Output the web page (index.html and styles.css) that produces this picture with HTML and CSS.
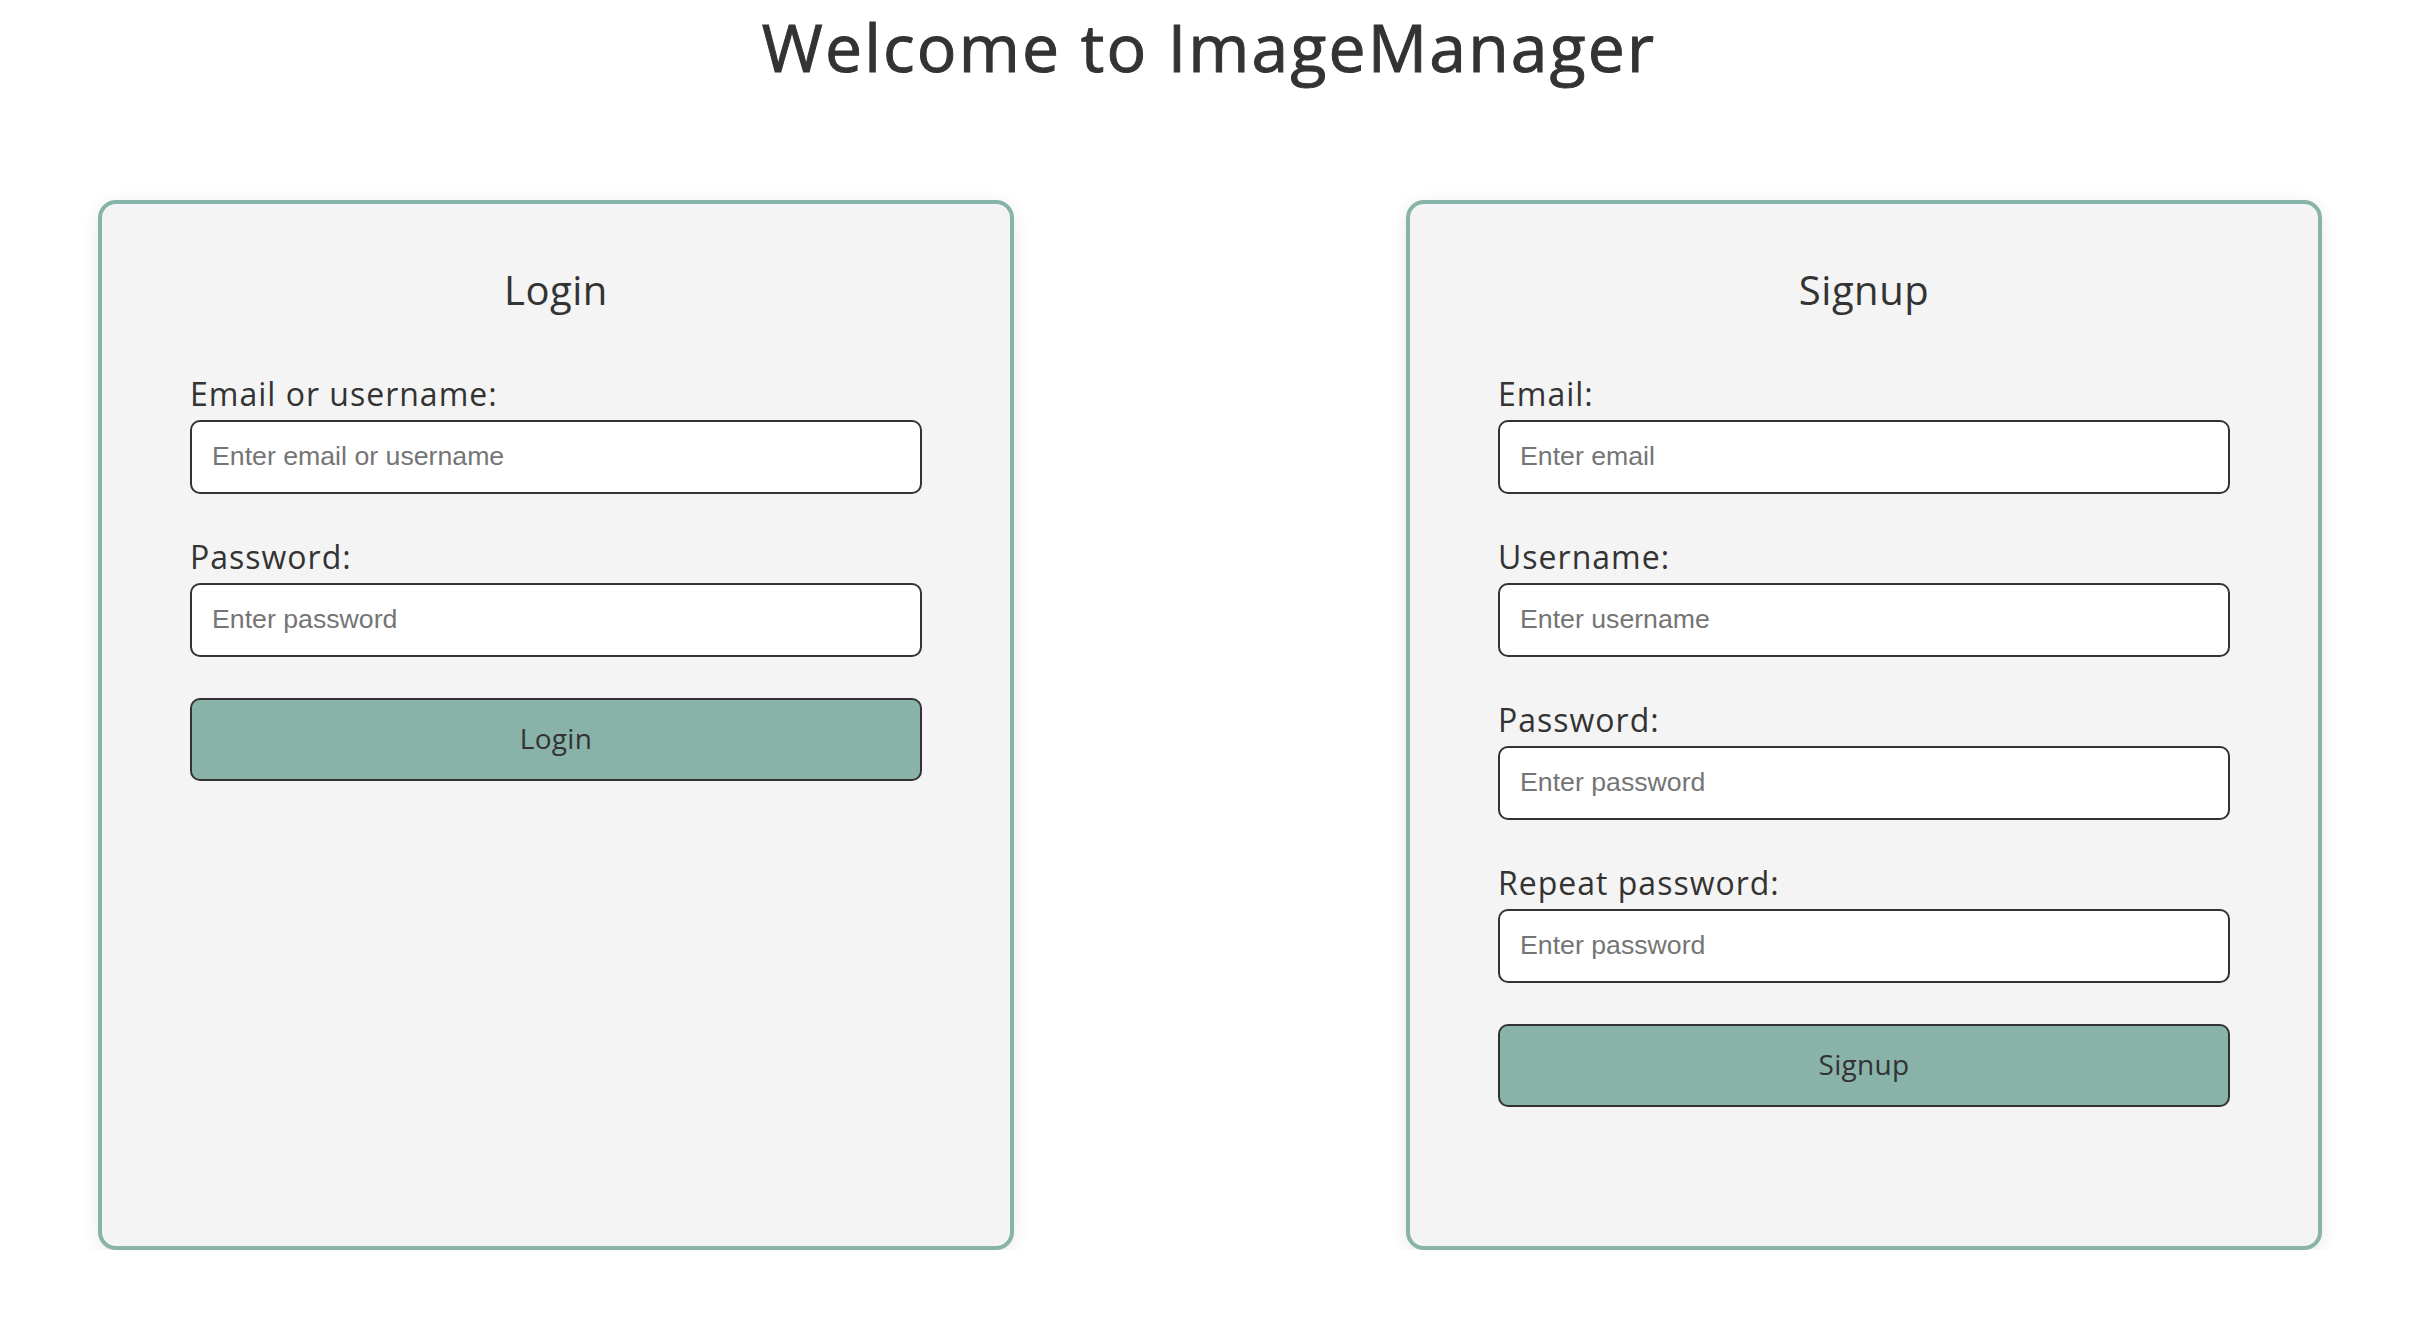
FILE: index.html
```html
<!DOCTYPE html>
<html lang="en">
<head>
<meta charset="utf-8">
<title>ImageManager</title>
<link rel="stylesheet" href="styles.css">
</head>
<body>
<h1 class="page-title">Welcome to ImageManager</h1>
<main class="auth">
  <section class="card">
    <h2 class="card-title">Login</h2>
    <form class="form">
      <div class="field">
        <label class="label" for="login-id">Email or username:</label>
        <input class="input" id="login-id" type="text" placeholder="Enter email or username">
      </div>
      <div class="field">
        <label class="label" for="login-pw">Password:</label>
        <input class="input" id="login-pw" type="password" placeholder="Enter password">
      </div>
      <button class="btn" type="button">Login</button>
    </form>
  </section>
  <section class="card">
    <h2 class="card-title">Signup</h2>
    <form class="form">
      <div class="field">
        <label class="label" for="su-email">Email:</label>
        <input class="input" id="su-email" type="email" placeholder="Enter email">
      </div>
      <div class="field">
        <label class="label" for="su-user">Username:</label>
        <input class="input" id="su-user" type="text" placeholder="Enter username">
      </div>
      <div class="field">
        <label class="label" for="su-pw">Password:</label>
        <input class="input" id="su-pw" type="password" placeholder="Enter password">
      </div>
      <div class="field">
        <label class="label" for="su-pw2">Repeat password:</label>
        <input class="input" id="su-pw2" type="password" placeholder="Enter password">
      </div>
      <button class="btn" type="button">Signup</button>
    </form>
  </section>
</main>
</body>
</html>
```

FILE: styles.css
```css
* { box-sizing: border-box; }

body {
  margin: 0;
  background: #ffffff;
  color: #333333;
  font-family: "Open Sans", "Noto Sans", sans-serif;
}

.page-title {
  margin: 1px 0 0;
  font-size: 66px;
  line-height: 90px;
  font-weight: 500;
  text-align: center;
  color: #333333;
  letter-spacing: 2.2px;
  -webkit-text-stroke: 1px #333333;
}

.auth {
  display: flex;
  justify-content: space-between;
  align-items: stretch;
  padding: 0 96px 0 98px;
  margin-top: 109px;
}

.card {
  width: 916px;
  background: #f4f4f4;
  border: 4px solid #88b3a8;
  border-radius: 18px;
  padding: 58px 88px 139px 88px;
  box-shadow: 0 4px 18px rgba(0, 0, 0, 0.09);
}

.card-title {
  margin: 0 0 53px;
  font-size: 40px;
  line-height: 56px;
  font-weight: 400;
  text-align: center;
  color: #333333;
  letter-spacing: 0.5px;
}

.form {
  display: flex;
  flex-direction: column;
}

.field {
  display: flex;
  flex-direction: column;
  margin-bottom: 40px;
}

.label {
  font-size: 32px;
  line-height: 46px;
  margin-bottom: 3px;
  color: #333333;
  letter-spacing: 1px;
}

.input {
  height: 74px;
  width: 100%;
  border: 2px solid #333333;
  border-radius: 10px;
  background: #ffffff;
  padding: 0 20px 2px;
  font-family: "Liberation Sans", Arial, sans-serif;
  font-size: 26.7px;
  color: #333333;
}

.input::placeholder {
  color: #757575;
}

.btn {
  height: 83px;
  width: 100%;
  margin-top: 1px;
  border: 2px solid #333333;
  border-radius: 10px;
  background: #89b2a9;
  color: #333333;
  font-family: "Open Sans", "Noto Sans", sans-serif;
  font-size: 28px;
  letter-spacing: 0.3px;
  padding: 0 0 4px;
}
```
